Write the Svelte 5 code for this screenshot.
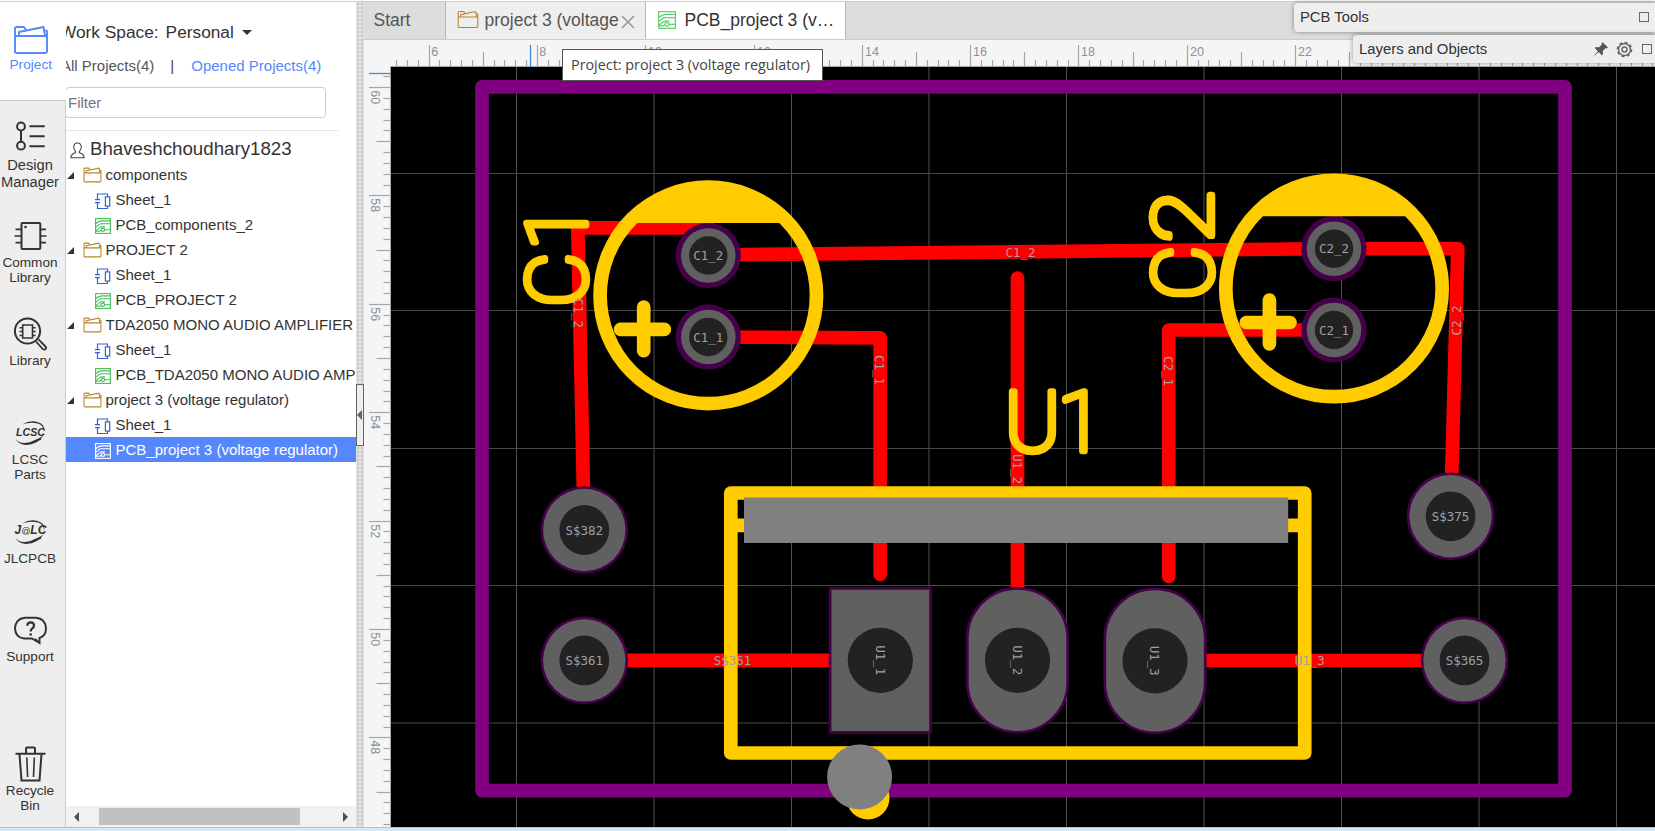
<script>
  const rail = [
    { icon: 'design', lines: ['Design', 'Manager'], h: 99.7, wide: true },
    { icon: 'common', lines: ['Common', 'Library'], h: 98.3 },
    { icon: 'library', lines: ['Library'], h: 99 },
    { icon: 'lcsc', lines: ['LCSC', 'Parts'], h: 99 },
    { icon: 'jlc', lines: ['JLCPCB'], h: 98 },
    { icon: 'support', lines: ['Support'], h: 134.5 },
    { icon: 'bin', lines: ['Recycle', 'Bin'], h: 80 }
  ];
  const tree = [
    ['folder', 'components'],
    ['sheet', 'Sheet_1'],
    ['pcb', 'PCB_components_2'],
    ['folder', 'PROJECT 2'],
    ['sheet', 'Sheet_1'],
    ['pcb', 'PCB_PROJECT 2'],
    ['folder', 'TDA2050 MONO AUDIO AMPLIFIER'],
    ['sheet', 'Sheet_1'],
    ['pcb', 'PCB_TDA2050 MONO AUDIO AMP'],
    ['folder', 'project 3 (voltage regulator)'],
    ['sheet', 'Sheet_1'],
    ['pcb', 'PCB_project 3 (voltage regulator)', true]
  ];

  const kind = (i) => (i % 10 === 0 ? 2 : i % 5 === 0 ? 1 : 0);
  const hTicks = [];
  for (let i = -3; i <= 113; i++) hTicks.push({ x: Math.round(428.6 + i * 10.83) + 0.5, k: kind(i + 1000), n: 6 + i / 5 });
  const vTicks = [];
  for (let i = -1; i <= 68; i++) vTicks.push({ y: Math.round(87 + i * 10.84) + 0.5, k: kind(i + 1000), n: 60 - i / 5 });

  const gridX = [516.5, 654, 791.5, 929, 1066.5, 1204, 1341.5, 1479, 1616.5];
  const gridY = [173.5, 310.5, 448.5, 585.5, 723];

  const tracks = [
    'M708.3 255.5V227.8H577.8L584.3 530',
    'M708.3 255L1334 248.6H1457.8L1450.6 516.3',
    'M708.3 337L880.2 337.8V574.5',
    'M1017.5 278V660',
    'M1334 330H1168.7V576.5',
    'M584.3 660.3H880.4',
    'M1155 660.5H1464.5'
  ];
  const smallPads = [
    ['C1_2', 708.3, 255.5], ['C1_1', 708.3, 337],
    ['C2_2', 1334, 248.7], ['C2_1', 1334, 330]
  ];
  const viaPads = [
    ['S$382', 584.3, 530], ['S$361', 584.3, 660.4],
    ['S$375', 1450.6, 516.3], ['S$365', 1464.5, 660.4]
  ];
  const pinPads = [
    ['U1_1', 880.3, 660.3, 0], ['U1_2', 1017.5, 660.3, 49], ['U1_3', 1155, 660.8, 49]
  ];
  const caps = [[708.3, 295.4], [1334, 288.5]];
  const netLabels = [
    ['C1_2', 1020.5, 252.5, 0], ['S$361', 732.5, 660.5, 0], ['U1_3', 1309.8, 660.5, 0],
    ['C1_2', 579, 313, 90], ['C1_1', 879.5, 370, 90], ['C2_1', 1168.5, 371, 90],
    ['U1_2', 1017.5, 469, 90], ['C2_2', 1456, 320.5, -90]
  ];
</script>

{#snippet folder(w, h, color, sw)}
  <svg width={w} height={h} viewBox="0 0 36 30" fill="none" stroke={color} stroke-width={sw} stroke-linejoin="round">
    <path d="M2 28V3.500Q2 2 3.500 2H11L13 5M2 11H34V26.500Q34 28 32.500 28H3.500Q2 28 2 26.500M34 11V6.500Q34 5.500 32 5.500M6 11V7L30.500 2L32 11" />
  </svg>
{/snippet}

{#snippet pcb(size, color)}
  <svg width={size} height={size} viewBox="0 0 16 16" fill="none" stroke={color} stroke-width="1.100">
    <rect x=".600" y=".600" width="14.800" height="14.800" />
    <path d="M1 5.500Q3.500 3 7 2.900H15M1 9.200L4.200 6.400Q5 5.800 6 5.800H15M1 12.700L5 9.400Q5.600 8.900 6.500 8.900H10M1 13.300H4.500L6.200 12.200M9.600 11.800H15" />
    <circle cx="7.900" cy="11.800" r="1.700" />
  </svg>
{/snippet}

{#snippet railIcon(name)}
  <svg class="ri" width="40" height="40" viewBox="0 0 40 40" fill="none" stroke="#333" stroke-width="2">
    {#if name === 'design'}
      <circle cx="11" cy="10.500" r="3.900" /><circle cx="11" cy="29.700" r="3.900" />
      <path d="M11 14.500V25.700M19.500 10.300H34.700M19.500 20.300H34.700M19.500 30.300H34.700" />
    {:else if name === 'common'}
      <rect x="11.500" y="7" width="18.800" height="26" rx="1" />
      <path d="M5.500 13.300H11M4.500 20H11M5.500 26.700H11M30.500 13.300H36M30.500 20H36.500M30.500 26.700H36" stroke-width="1.700" />
      <circle cx="15.500" cy="11" r="1.300" fill="#333" stroke="none" />
    {:else if name === 'library'}
      <circle cx="17.500" cy="17" r="12.600" />
      <path d="M26 27.500L33 35.300Q35 36.300 36 34.500Q36.500 33.500 35.500 32.500L28.500 25.300" stroke-width="1.800" />
      <path d="M12.700 11H22.500V24H12.700ZM9.500 13.700H12.500M9.500 17.500H12.500M9.500 21.500H12.500M22.700 13.700H25.600M22.700 17.500H25.600M22.700 21.500H25.600" stroke-width="1.600" />
    {:else if name === 'lcsc' || name === 'jlc'}
      <path d="M12 11.500Q22 5.500 31 10.500Q35.500 13.500 34 19Q34 12.500 28 10.500Q20 8.500 12 11.500Z" fill="#333" stroke="none" />
      <path d="M5.500 25Q7 30 15 30Q24 29.500 33.500 22.500Q28 31.500 16 32Q7 31 5.500 25Z" fill="#333" stroke="none" />
      <path d="M22 29.500L31 25.500" stroke-width="2" />
      {#if name === 'lcsc'}
        <text class="logo" x="20.500" y="22.700" text-anchor="middle" textLength="29" lengthAdjust="spacingAndGlyphs">LCSC</text>
      {:else}
        <text class="logo jl" x="4.500" y="22">J<tspan class="at">@</tspan>LC</text>
      {/if}
    {:else if name === 'support'}
      <path d="M25 29Q28 32 29.500 33V28Q36 26 36 18.500Q35.500 8.500 26 7.700H15Q5.500 8.500 5 18.500Q5.500 27.500 14 28.500H22L29.500 33" />
      <path d="M17.300 15.700Q17.300 12.300 20.700 12.300Q24 12.500 24 15.500Q24 17.200 22.300 18.400Q20.700 19.600 20.700 21.500" stroke-width="2.200" />
      <circle cx="20.700" cy="24.500" r="1.300" fill="#333" stroke="none" />
    {:else}
      <path d="M5.500 9.700H35.500M16 9V4.500Q16 3.500 17 3.500H24Q25 3.500 25 4.500V9M9.500 10L11.500 36.500H29.500L31.500 10" />
      <path d="M16.800 13.500L17.600 33M24.300 13.500L23.500 33" stroke-width="1.600" />
    {/if}
  </svg>
{/snippet}

<div class="app">
  <div class="body">
    <nav class="rail">
      <div class="tab-active">
        {@render folder(36, 30, '#5588ff', 1.9)}
        <span>Project</span>
      </div>
      <div class="rest">
        {#each rail as it}
          <div class="item" class:wide={it.wide} style="height:{it.h}px">
            {@render railIcon(it.icon)}
            {#each it.lines as l}<span>{l}</span>{/each}
          </div>
        {/each}
      </div>
    </nav>

    <aside class="panel">
      <div class="ws"><span>Work Space:</span><span class="sel">Personal</span><i></i></div>
      <div class="scope"><span>All Projects(4)</span><b>|</b><span class="on">Opened Projects(4)</span></div>
      <div class="filter">Filter</div>
      <div class="user">
        <svg width="15" height="17" viewBox="0 0 15 17" fill="none" stroke="#444" stroke-width="1.100">
          <path d="M5.600 9.500Q3.500 7.500 3.700 4.500Q4.200 1 7.500 1Q10.800 1 11.300 4.500Q11.500 7.500 9.400 9.500V10.800Q14 12 14.200 15.800H.8Q1 12 5.600 10.800Z" />
        </svg>
        <span>Bhaveshchoudhary1823</span>
      </div>
      <div class="tree">
        {#each tree as [type, label, sel]}
          <div class="row" class:child={type !== 'folder'} class:selected={sel}>
            {#if type === 'folder'}
              <svg class="arrow" width="7" height="7" viewBox="0 0 7 7"><path d="M7 0V7H0Z" fill="#333" /></svg>
              {@render folder(19, 16, '#b8862d', 2)}
            {:else if type === 'sheet'}
              <svg width="16" height="17" viewBox="0 0 16 17" fill="none" stroke="#2f63d8" stroke-width="1.200">
                <path d="M2.500 6.500V1H12.500V3.800M2.500 9.500V15.500H12.500V13.200M0 6.700H5M0 9.700H5" />
                <rect x="10.400" y="3.900" width="4.300" height="9.200" />
              </svg>
            {:else}
              {@render pcb(16, sel ? '#fff' : '#46bd58')}
            {/if}
            <span>{label}</span>
          </div>
        {/each}
      </div>
      <div class="hscroll">
        <svg width="5" height="10" viewBox="0 0 5 10"><path d="M5 0V10L0 5Z" fill="#505050" /></svg>
        <div class="thumb"></div>
        <svg width="5" height="10" viewBox="0 0 5 10"><path d="M0 0V10L5 5Z" fill="#505050" /></svg>
      </div>
    </aside>

    <div class="split">
      <div class="grip"><svg width="5" height="10" viewBox="0 0 5 10"><path d="M5 0V10L0 5Z" fill="#6b6060" /></svg></div>
    </div>

    <main class="work">
      <div class="tabs">
        <div class="tab start">Start</div>
        <div class="tab proj">
          {@render folder(22, 19, '#b8862d', 1.8)}
          <span>project 3 (voltage</span>
          <svg class="x" width="14" height="14" viewBox="0 0 14 14" stroke="#999" stroke-width="1.600"><path d="M1 1L13 13M13 1L1 13" /></svg>
        </div>
        <div class="tab cur">
          {@render pcb(18, '#5fcf70')}
          <span>PCB_project 3 (v…</span>
        </div>
      </div>

      <svg class="hr" width="1291" height="27" viewBox="364 40 1291 27">
        <rect x="364" y="40" width="1291" height="27" fill="#f5f5f5" />
        {#each hTicks as t}
          <line x1={t.x} x2={t.x} y1={[60, 52, 45][t.k]} y2="66" stroke="#a6a6a6" stroke-width="1.200" />
          {#if t.k === 2}<text x={t.x + (t.n < 10 ? 1.8 : 2.5)} y="55.500">{t.n}</text>{/if}
        {/each}
        <line x1="390" x2="1655" y1="66.500" y2="66.500" stroke="#a6a6a6" />
        <line x1="530.500" x2="530.500" y1="45" y2="67" stroke="#3c8edc" stroke-width="1.300" />
      </svg>

      <div class="stage">
        <svg class="vr" width="27" height="760" viewBox="364 67 27 760">
          <rect x="364" y="67" width="27" height="760" fill="#f5f5f5" />
          {#each vTicks as t}
            <line y1={t.y} y2={t.y} x1={[383.5, 376.5, 369][t.k]} x2="391" stroke="#a6a6a6" stroke-width="1.200" />
            {#if t.k === 2}<text transform="translate(370.500 {t.y + 2.8}) rotate(90)">{t.n}</text>{/if}
          {/each}
          <line x1="390.500" x2="390.500" y1="66" y2="827" stroke="#a6a6a6" />
          <line x1="369" x2="391" y1="73.500" y2="73.500" stroke="#3c8edc" stroke-width="1.300" />
        </svg>

        <svg class="board" width="1264" height="760" viewBox="391 67 1264 760">
          <rect x="391" y="67" width="1264" height="760" fill="#000" />
          {#each gridX as x}<line x1={x} x2={x} y1="67" y2="827" stroke="#505050" />{/each}
          {#each gridY as y}<line x1="391" x2="1655" y1={y} y2={y} stroke="#484848" />{/each}

          <g fill="none" stroke="#f00" stroke-width="13.700" stroke-linecap="round" stroke-linejoin="round">
            {#each tracks as d}<path {d} />{/each}
          </g>
          <rect x="482" y="86.900" width="1083" height="703.700" fill="none" stroke="#800080" stroke-width="13.700" stroke-linejoin="round" />

          {#each smallPads as [, x, y]}
            <circle cx={x} cy={y} r="32.600" fill="#45004a" />
            <circle cx={x} cy={y} r="27.300" fill="#606060" />
            <circle cx={x} cy={y} r="19.200" fill="#222" />
          {/each}
          {#each viaPads as [, x, y]}
            <circle cx={x} cy={y} r="43.800" fill="#45004a" />
            <circle cx={x} cy={y} r="41.200" fill="#606060" />
            <circle cx={x} cy={y} r="24.900" fill="#222" />
          {/each}
          {#each pinPads as [, x, y, r]}
            <rect x={x - 50.2} y={y - 72} width="100.400" height="144" rx={r ? 50 : 0} fill="#606060" stroke="#45004a" stroke-width="2.700" stroke-linejoin="round" />
            <circle cx={x} cy={y} r="32.600" fill="#222" />
          {/each}

          <g fill="none" stroke="#fc0" stroke-width="13.700" stroke-linecap="round" stroke-linejoin="round">
            <path d="M730.800 493H1304.700V753H730.800ZM730.800 525.400H1304.700" />
            {#each caps as [x, y]}
              <circle cx={x} cy={y} r="108.200" />
              <path d="M{x - 87.7} {y - 72.3}A114 114 0 0 1 {x + 87.7} {y - 72.3}Z" fill="#fc0" stroke="none" />
              <path d="M{x - 64.6} {y + 11.7}V{y + 55.3}M{x - 87.7} {y + 34}H{x - 44}" />
            {/each}
          </g>
          <circle cx="868" cy="798" r="21.500" fill="#fc0" />
          <rect x="744" y="497.500" width="544.200" height="45.500" fill="#808080" />
          <circle cx="859.600" cy="777" r="32.500" fill="#808080" />

          <g class="silk">
            <text transform="translate(586.200 307) rotate(-90)" x="0 57">C1</text>
            <text transform="translate(1211.500 300) rotate(-90)" x="0">C</text>
            <text transform="translate(1211.500 242.500) rotate(-90) scale(1.120 1)" x="0">2</text>
            <text transform="translate(1004.500 450.500)" x="0 53">U1</text>
          </g>

          <g class="net">
            {#each [...smallPads, ...viaPads] as [t, x, y]}<text {x} y={y + 4.7}>{t}</text>{/each}
            {#each pinPads as [t, x, y]}<text transform="translate({x} {y}) rotate(90)" y="4.700">{t}</text>{/each}
            {#each netLabels as [t, x, y, a]}<text transform="translate({x} {y}) rotate({a})" y="4.700">{t}</text>{/each}
          </g>
        </svg>
      </div>
    </main>
  </div>

  <div class="tip">Project: project 3 (voltage regulator)</div>
  <div class="float tools"><span>PCB Tools</span><i class="box"></i></div>
  <div class="float layers">
    <span>Layers and Objects</span>
    <svg width="15" height="15" viewBox="0 0 15 15"><path d="M9.500 0L15 5.500L13.500 6.500L12.800 6L9.800 9L10 12L8.800 13.200L5.700 10.100L0 15L4.800 9.200L1.800 6.100L3 5L6 5.200L9 2.200L8.500 1.500Z" fill="#555" /></svg>
    <svg class="gear" width="17" height="17" viewBox="0 0 17 17" fill="none" stroke="#666">
      <circle cx="8.500" cy="8.500" r="7" stroke-width="1.700" stroke-dasharray="2.750 2.750" />
      <circle cx="8.500" cy="8.500" r="6" stroke-width="1.500" />
      <circle cx="8.500" cy="8.500" r="2.500" stroke-width="1.400" />
    </svg>
    <i class="box"></i>
  </div>
</div>

<style>
  :global(body) { margin: 0; overflow: hidden; }
  .app { position: relative; width: 1655px; height: 831px; box-sizing: border-box; background: #fff; border-bottom: 3px solid #d3e9f5; font-family: "Liberation Sans", Arial, sans-serif; color: #333; overflow: hidden; }
  .body { display: flex; box-sizing: border-box; padding-top: 1px; border-bottom: 1px solid #b9c0c4; height: 828px; }
  .app svg { flex: none; display: block; }
  .rail, .panel, .split, .work { border-top: 1px solid #ccc; height: 825px; flex: none; }

  .rail { width: 66px; display: flex; flex-direction: column; }
  .tab-active { height: 98px; box-sizing: border-box; padding: 22.500px 4.500px 0 0; display: flex; flex-direction: column; align-items: center; color: #5588ff; font-size: 13.7px; line-height: 15px; }
  .tab-active span { margin-top: 2px; }
  .rest { flex: 1; background: #eee; border-top: 1px solid #ccc; border-right: 1px solid #ccc; padding-top: 15px; }
  .item { display: flex; flex-direction: column; align-items: center; padding-right: 5px; font-size: 13.6px; line-height: 15px; }
  .item.wide { font-size: 14.7px; line-height: 17px; }
  .ri { margin-bottom: -1px; }
  .wide .ri { margin-bottom: 1px; }
  .logo { font: italic bold 11.500px "Liberation Sans", sans-serif; fill: #333; stroke: none; }
  .jl { font-size: 12px; }
  .at { font-size: 9px; font-weight: normal; }

  .panel { width: 290px; overflow: hidden; display: flex; flex-direction: column; white-space: nowrap; }
  .ws { display: flex; align-items: center; height: 20px; margin: 20px 0 0 -6px; font-size: 17.300px; line-height: 20px; }
  .ws .sel { margin: -1px 0 0 7px; }
  .ws i { margin: 1px 0 0 8px; border: 5px solid transparent; border-top-color: #333; border-bottom: 0; }
  .scope { display: flex; height: 18px; margin: 15px 0 0 -5px; font-size: 15px; line-height: 18px; color: #555; }
  .scope b { margin: 0 17px 0 16px; font-weight: normal; color: #504050; }
  .scope .on { color: #5588ff; }
  .filter { width: 257px; height: 29px; margin: 12px 0 0 -1px; padding-left: 2px; border: 1px solid #ccc; border-radius: 4px; font-size: 15px; line-height: 29px; color: #757575; }
  .user { display: flex; align-items: center; height: 31px; margin-top: 12px; padding-left: 4px; width: 268px; border-top: 1px solid #e6e6e6; font-size: 18.700px; }
  .user span { margin: 5px 0 0 5px; line-height: 20px; }
  .user svg { margin-top: 8px; }
  .tree { flex: 1; }
  .row { display: flex; align-items: center; height: 25px; font-size: 15px; line-height: 25px; padding-left: 1px; }
  .row .arrow { margin: 1px 9px 0 0; }
  .row span { margin-left: 3.500px; }
  .row.child { padding-left: 29px; }
  .row.child span { margin-left: 4.500px; }
  .row.child svg { margin-top: 3px; }
  .row.selected { background: #5588ff; color: #fff; }
  .hscroll { height: 21px; display: flex; align-items: center; background: #f1f1f1; padding-left: 8px; }
  .thumb { width: 201px; height: 17px; margin: 0 43px 0 20px; background: #c1c1c1; }

  .split { width: 8px; background-color: #e0e0e0; background-image: radial-gradient(circle, #c4c4c4 1px, transparent 1.100px); background-size: 4px 4px; display: flex; flex-direction: column; }
  .grip { height: 60px; margin-top: 382px; border: 1px solid #6b6060; background: #eee; display: flex; align-items: center; }

  .work { width: 1291px; display: flex; flex-direction: column; }
  .tabs { height: 37px; display: flex; background: #ddd; border-bottom: 1px solid #ccc; font-size: 17.500px; line-height: 36px; white-space: nowrap; }
  .tab { display: flex; align-items: center; border-right: 1px solid #b8b8b8; box-sizing: border-box; }
  .tab span { line-height: 36px; height: 37px; }
  .start { width: 82px; padding: 0 0 1px 9.500px; color: #555; }
  .proj { width: 200px; padding-left: 10.500px; background: #eee; color: #555; }
  .app .proj svg, .app .cur svg { margin-bottom: 2px; }
  .proj span { margin-left: 6px; }
  .app .proj .x { margin: 2px 0 0 2px; }
  .cur { width: 200px; padding-left: 11.500px; background: #fff; color: #333; }
  .cur span { margin-left: 9px; }
  .hr text, .vr text { font: 12.500px "Liberation Sans", sans-serif; fill: #8792a0; }
  .stage { display: flex; }

  .silk text { font-family: Roboto, sans-serif; font-weight: 100; font-size: 84px; fill: #fc0; stroke: #fc0; stroke-width: 6.500px; stroke-linejoin: round; }
  .net text { font: 12.500px "DejaVu Sans Mono", monospace; fill: #a0a0a0; text-anchor: middle; }

  .tip { position: absolute; left: 562px; top: 49px; width: 261px; height: 32px; box-sizing: border-box; border: 1px solid #555; background: #fff; font: 14.350px/30px "Open Sans", sans-serif; color: #444; padding-left: 8px; white-space: nowrap; }
  .float { position: absolute; right: 0; box-sizing: border-box; display: flex; align-items: center; background: #eee; border-radius: 4px 0 0 4px; box-shadow: 0 0 5px rgba(0, 0, 0, .4); font-size: 14.900px; white-space: nowrap; }
  .tools { top: 3px; width: 361px; height: 29px; padding: 0 6px 2px 6px; justify-content: space-between; font-size: 14.800px; }
  .layers { top: 35px; width: 302px; height: 28px; padding: 0 3px 0 6px; }
  .layers span { flex: 1; }
  .gear { margin: 0 9px 0 8px; }
  .box { width: 8px; height: 8px; border: 1.500px solid #666; }
</style>
